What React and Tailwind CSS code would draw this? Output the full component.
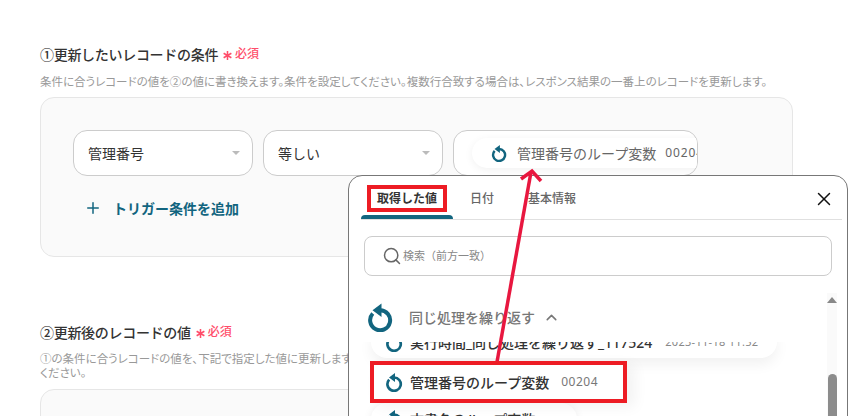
import React from 'react';
import { Search, X, ChevronUp, Plus } from 'lucide-react';

const FONT = 'font-["Noto_Sans","Noto_Sans_CJK_JP",sans-serif]';

function LoopIcon({ className }) {
    return (
        <svg viewBox="0 0 24 24" className={className} fill="none">
            <path d="M6.2 9.2A8 8 0 1 0 12 6.6" stroke="#12657f" strokeWidth="3.2" />
            <path d="M13.2 1.2V12L6 6.6Z" fill="#12657f" />
        </svg>
    );
}

function Heading({ children }) {
    return (
        <div className="flex h-5 items-center text-[14px] font-medium tracking-[-0.3px] text-[#333]">
            {children}
            <span className="ml-[5px] flex items-center text-[12px] font-medium tracking-normal text-[#ff4d6a]">
                <svg viewBox="0 0 10 10" className="mr-[3px] mt-[3px] h-[9px] w-[9px]" stroke="#ff4d6a" strokeWidth="1.7">
                    <path d="M5 0V10M0.7 2.5L9.3 7.5M9.3 2.5L0.7 7.5" />
                </svg>
                必須
            </span>
        </div>
    );
}

function SelectBox({ label, className }) {
    return (
        <div className={`flex h-[46px] items-center justify-between rounded-[14px] border border-[#ccc] bg-white pl-[14px] pr-[12px] text-[14px] text-[#333] ${className}`}>
            {label}
            <span className="border-x-[4px] border-t-[4px] border-x-transparent border-t-[#bbb]" />
        </div>
    );
}

function Tabs() {
    return (
        <div className="mx-[5px] flex h-[44px] shrink-0 items-center border-b border-[#e0e0e0] pt-[2px] text-[12px] font-medium text-[#666]">
            <div className="relative flex h-full w-[92px] items-center justify-center text-[#333]">
                <span className="flex h-[27px] w-[80px] items-center justify-center border-4 border-[#ed1c24] font-bold">取得した値</span>
                <span className="absolute bottom-0 left-0 h-[4px] w-full rounded-t bg-[#12657f]" />
            </div>
            <span className="ml-[17px]">日付</span>
            <span className="ml-[34px]">基本情報</span>
            <X size={22} strokeWidth={1.6} className="ml-auto mr-[7px] text-[#111]" />
        </div>
    );
}

function ValueList() {
    return (
        <div className="relative flex-1">
            <div className="flex h-[66px] items-center pl-[9px] pt-[16px] text-[14px] font-medium text-[#777]">
                <LoopIcon className="mr-[14px] h-[30px] w-[30px]" />
                同じ処理を繰り返す
                <ChevronUp size={17} strokeWidth={2.2} className="ml-[8px]" />
            </div>
            <div className="flow-root h-[16px] [clip-path:inset(0_-30px_-30px_-30px)]">
                <div className="-mt-[16px] ml-[15px] flex h-[32px] w-[406px] items-center rounded-[16px] bg-white pl-[13px] text-[14px] font-medium text-[#333] shadow-[0_6px_14px_rgba(0,0,0,0.06)]">
                    <LoopIcon className="mr-[6px] h-[20px] w-[20px]" />
                    実行時間_同じ処理を繰り返す_117524
                    <span className="ml-[13px] text-[11px] font-normal tracking-[0.3px] text-[#888]">2023-11-18 11:52</span>
                </div>
            </div>
            <div className="relative z-10 mt-[3px] ml-[14px] flex h-[42px] w-[257px] items-center border-4 border-[#ed1c24] bg-white pl-[10px] text-[14px] font-medium text-[#333] shadow-[8px_4px_14px_rgba(0,0,0,0.05)]">
                <LoopIcon className="mr-[6px] h-[20px] w-[20px]" />
                管理番号のループ変数
                <span className="ml-[12px] text-[12px] font-normal tracking-[0.5px] text-[#777]">00204</span>
            </div>
            <div className="ml-[15px] flex h-[32px] w-[206px] items-center rounded-full bg-white pl-[13px] text-[14px] font-medium text-[#333] shadow-[0_2px_10px_rgba(0,0,0,0.08)]">
                <LoopIcon className="mr-[6px] h-[20px] w-[20px]" />
                文書名のループ変数
            </div>
            {/* scrollbar */}
            <div className="absolute right-[10px] top-[17px] flex h-full w-[10px] flex-col items-center bg-[#fafafa]">
                <span className="mt-[4px] border-x-[5px] border-b-[6px] border-x-transparent border-b-[#888]" />
                <span className="mt-[71px] h-[60px] w-[9px] rounded-full bg-[#8c8c8c]" />
            </div>
        </div>
    );
}

export default function App() {
    return (
        <div className={`relative h-[416px] w-[868px] overflow-hidden bg-white ${FONT}`}>
            <div className="ml-[40px] w-[753px] pt-[44px]">
                <Heading>①更新したいレコードの条件</Heading>
                <p className="mt-[11px] whitespace-nowrap text-[11.5px] leading-[14px] text-[#999] [font-feature-settings:'palt']">
                    条件に合うレコードの値を②の値に書き換えます。条件を設定してください。複数行合致する場合は、レスポンス結果の一番上のレコードを更新します。
                </p>
                <div className="mt-[8px] h-[160px] rounded-[14px] border border-[#e6e6e6] bg-[#fafafa] px-[32px] pt-[32px]">
                    <div className="flex gap-[10px]">
                        <SelectBox label="管理番号" className="w-[180px]" />
                        <SelectBox label="等しい" className="w-[180px]" />
                        <div className="flex h-[46px] w-[245px] items-center overflow-hidden rounded-[14px] border border-[#ccc] bg-white pl-[18px]">
                            <div className="flex h-[30px] shrink-0 items-center rounded-full bg-white pl-[18px] pr-[20px] text-[14px] text-[#666] shadow-[0_2px_8px_rgba(0,0,0,0.06)]">
                                <LoopIcon className="mr-[9px] h-[18px] w-[18px]" />
                                管理番号のループ変数
                                <span className="ml-[9px] text-[12px] tracking-[0.9px]">00204</span>
                            </div>
                        </div>
                    </div>
                    <div className="ml-[11px] mt-[22px] flex h-5 items-center text-[14px] font-bold text-[#12657f]">
                        <Plus size={18} strokeWidth={2} className="mr-[11px]" />
                        トリガー条件を追加
                    </div>
                </div>

                <div className="mt-[65px]">
                    <Heading>②更新後のレコードの値</Heading>
                    <p className="mt-[10px] text-[11.5px] leading-[14px] text-[#999] [font-feature-settings:'palt']">
                        ①の条件に合うレコードの値を、下記で指定した値に更新します。更新しない項目がある場合は、空欄のままにして次へ進んで
                        <br />
                        ください。
                    </p>
                    <div className="mt-[9px] h-[120px] rounded-[14px] border border-[#e6e6e6] bg-[#fafafa]" />
                </div>
            </div>

            {/* value picker popup */}
            <div className="absolute left-[348px] top-[175px] flex h-[300px] w-[500px] flex-col rounded-[14px] border border-[#777] bg-white pl-[7px]">
                <Tabs />
                <div className="ml-[8px] mt-[16px] flex h-[40px] w-[468px] shrink-0 items-center rounded-[8px] border border-[#ccc] pl-[17px] text-[11px] text-[#888]">
                    <Search size={20} strokeWidth={1.8} className="mr-[1px] text-[#666]" />
                    検索（前方一致）
                </div>
                <ValueList />
            </div>

            {/* annotation arrow */}
            <svg className="pointer-events-none absolute inset-0" width="868" height="416" viewBox="0 0 868 416" fill="none">
                <path d="M497 362L531 172" stroke="#e8173f" strokeWidth="3.5" />
                <path d="M521 179L532 171L541 181" stroke="#e8173f" strokeWidth="3.5" />
            </svg>
        </div>
    );
}
